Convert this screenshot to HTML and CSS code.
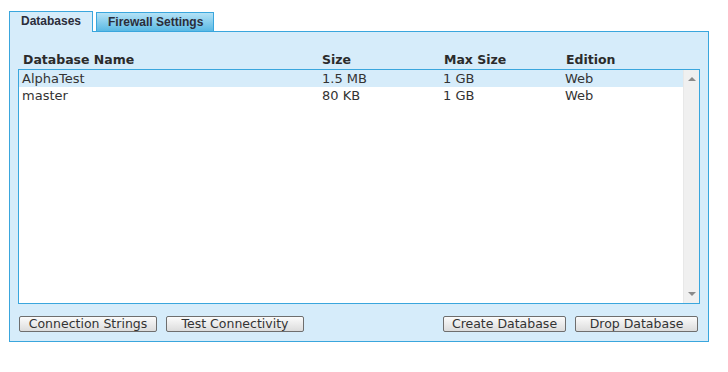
FILE: index.html
```html
<!DOCTYPE html>
<html lang="en">
<head>
  <meta charset="UTF-8">
  <title>Databases</title>
  <link rel="stylesheet" href="styles.css">
</head>
<body>
  <div class="tabs">
    <div class="tab active">Databases</div>
    <div class="tab">Firewall Settings</div>
  </div>

  <div class="panel">
    <div class="grid head">
      <span>Database Name</span>
      <span>Size</span>
      <span>Max Size</span>
      <span>Edition</span>
    </div>

    <div class="list">
      <div class="rows">
        <div class="grid row selected">
          <span>AlphaTest</span><span>1.5 MB</span><span>1 GB</span><span>Web</span>
        </div>
        <div class="grid row">
          <span>master</span><span>80 KB</span><span>1 GB</span><span>Web</span>
        </div>
      </div>
      <div class="scrollbar">
        <span class="arrow up"></span>
        <span class="arrow down"></span>
      </div>
    </div>

    <div class="buttons">
      <button class="wide">Connection Strings</button>
      <button class="wide">Test Connectivity</button>
      <span class="spacer"></span>
      <button>Create Database</button>
      <button>Drop Database</button>
    </div>
  </div>
</body>
</html>
```

FILE: styles.css
```css
* { box-sizing: border-box; }
body {
  margin: 0;
  padding: 11px 0 0 9px;
  background: #fff;
  font-family: "DejaVu Sans", Verdana, sans-serif;
  color: #333;
}
.tabs {
  display: flex;
  align-items: flex-end;
  gap: 3px;
  height: 20px;
  font-family: "Liberation Sans", Arial, sans-serif;
  font-weight: bold;
  font-size: 12px;
  color: #2b2d3a;
}
.tab {
  height: 19px;
  line-height: 18px;
  padding-left: 11px;
  width: 118px;
  border: 1px solid #3aa6dd;
  border-bottom: none;
  background: linear-gradient(#b4e2f6, #5ab9e4);
}
.tab.active {
  width: 84px;
  height: 21px;
  line-height: 19px;
  margin-bottom: -1px;
  position: relative;
  background: #d6ecfa;
}
.panel {
  width: 700px;
  height: 311px;
  border: 1px solid #3aa6dd;
  background: #d6ecfa;
  padding: 20px 8px 9px 8px;
  display: flex;
  flex-direction: column;
}
.grid {
  display: grid;
  grid-template-columns: 299px 122px 122px 1fr;
}
.head {
  height: 16px;
  line-height: 16px;
  padding-left: 5px;
  margin-bottom: 1px;
  font-size: 12.5px;
  font-weight: bold;
  color: #2b2b2b;
}
.list {
  height: 235px;
  border: 1px solid #3aa6dd;
  background: #fff;
  display: flex;
}
.rows { flex: 1; }
.row {
  height: 17px;
  line-height: 17px;
  padding-left: 3px;
  font-size: 13px;
  color: #333;
}
.row span:nth-child(2) { padding-left: 1px; }
.row.selected { background: #d6ecfa; }
.scrollbar {
  width: 16px;
  background: #f0f0f0;
  border-left: 1px solid #e8e8e8;
  position: relative;
}
.arrow {
  position: absolute;
  left: 4px;
  width: 0; height: 0;
  border-left: 4px solid transparent;
  border-right: 4px solid transparent;
}
.arrow.up { top: 7px; border-bottom: 4px solid #8a8a8a; }
.arrow.down { bottom: 7px; border-top: 4px solid #8a8a8a; }
.buttons {
  display: flex;
  gap: 9px;
  margin-top: 12px;
  padding: 0 2px 0 1px;
}
.spacer { flex: 1; }
button {
  width: 123px;
  height: 16px;
  padding: 0;
  font-family: "DejaVu Sans", Verdana, sans-serif;
  font-size: 12.5px;
  line-height: 14px;
  color: #333;
  border: 1px solid #6e6e6e;
  border-radius: 2px;
  background: linear-gradient(#fbfbfb, #dcdcdc);
}
button.wide { width: 138px; }
```
